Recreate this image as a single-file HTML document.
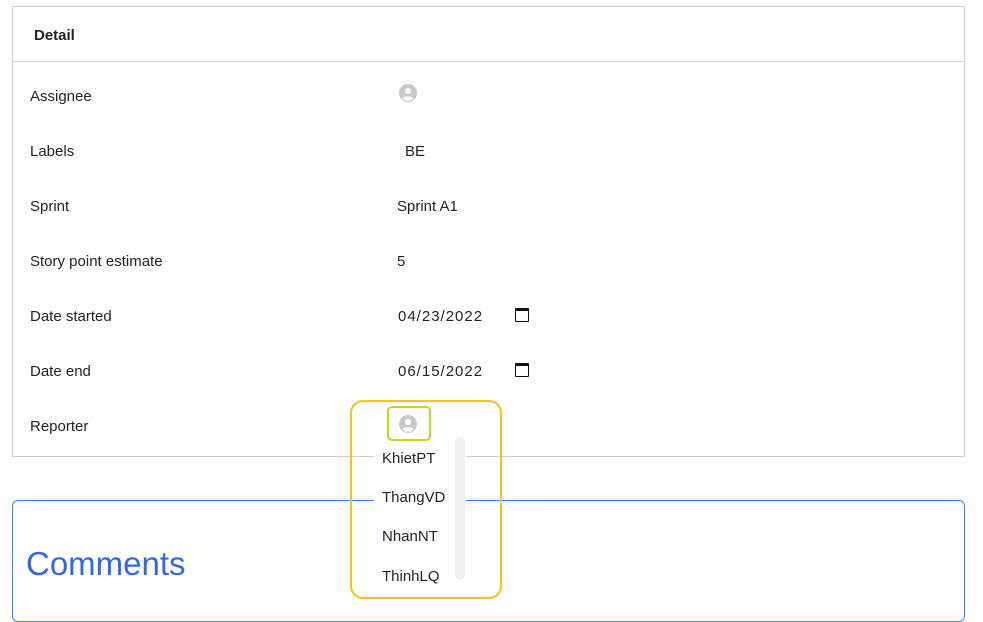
<!DOCTYPE html>
<html><head><style>
body{margin:0;width:983px;height:601px;overflow:hidden;background:#fff;font-family:"Liberation Sans",sans-serif;color:#212529;position:relative}
.box{position:absolute;left:12px;top:6px;width:951px;height:449px;border:1px solid #d0d0d0}
.hdr{position:absolute;left:0;top:0;width:951px;height:54px;border-bottom:1px solid #d0d0d0}
.hdr b{position:absolute;left:21px;top:20px;font-size:15px}
.l{position:absolute;left:30px;font-size:15px;top:0}
.v{position:absolute;left:397px;font-size:15px}
.av{position:absolute;width:18px;height:18px}
.cal{position:absolute;left:515px;width:14px;height:14px;border:1.5px solid #111;border-top-width:3.5px;box-sizing:border-box;border-radius:1px}
.cm{position:absolute;left:12px;top:500px;width:951px;height:120px;border:1px solid #3b82f6;border-radius:6px}
.cm span{position:absolute;left:13px;top:44px;font-size:33px;color:#3468e0}
.yel{position:absolute;left:350px;top:400px;width:148px;height:195px;border:2px solid #f7c315;border-radius:13px}
.grn{position:absolute;left:387px;top:406px;width:40px;height:31px;border:2px solid #b6e01e;border-radius:5px}
.menu{position:absolute;left:374px;top:437px;width:92px;height:170px;background:#fff}
.menu div{position:absolute;left:8px;font-size:15px}
.sb{position:absolute;left:455px;top:437px;width:10px;height:143px;background:#f0f0f3;border-radius:5px}
</style></head><body>
<div class="box"><div class="hdr"><b>Detail</b></div></div>
<div class="l" style="top:88px">Assignee</div>
<svg class="av" style="left:399px;top:84px" viewBox="0 0 18 18"><circle cx="9" cy="9" r="9" fill="#c8c8c8"/><circle cx="9" cy="7" r="3" fill="#fff"/><path d="M3.5 14.5c1.5-3 9.5-3 11 0a7.5 7.5 0 0 1-11 0z" fill="#fff"/></svg>
<div class="l" style="top:143px">Labels</div><div class="v" style="top:143px;left:405px">BE</div>
<div class="l" style="top:198px">Sprint</div><div class="v" style="top:198px">Sprint A1</div>
<div class="l" style="top:253px">Story point estimate</div><div class="v" style="top:253px">5</div>
<div class="l" style="top:308px">Date started</div><div class="v" style="top:308px;left:398px;letter-spacing:1px">04/23/2022</div><div class="cal" style="top:308px"></div>
<div class="l" style="top:363px">Date end</div><div class="v" style="top:363px;left:398px;letter-spacing:1px">06/15/2022</div><div class="cal" style="top:363px"></div>
<div class="l" style="top:418px">Reporter</div>
<div class="cm"><span>Comments</span></div>
<div class="menu"><div style="top:13px">KhietPT</div><div style="top:52px">ThangVD</div><div style="top:91px">NhanNT</div><div style="top:131px">ThinhLQ</div></div>
<div class="sb"></div>
<div class="yel"></div>
<div class="grn"></div>
<svg class="av" style="left:399px;top:415px" viewBox="0 0 18 18"><circle cx="9" cy="9" r="9" fill="#c8c8c8"/><circle cx="9" cy="7" r="3" fill="#fff"/><path d="M3.5 14.5c1.5-3 9.5-3 11 0a7.5 7.5 0 0 1-11 0z" fill="#fff"/></svg>
</body></html>
